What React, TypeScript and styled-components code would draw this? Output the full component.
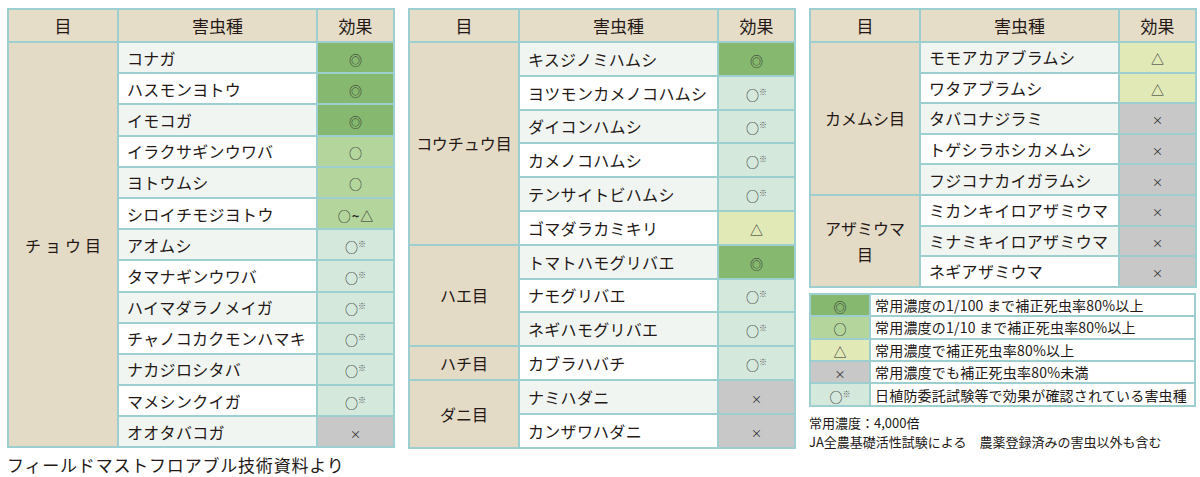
import React from 'react'
import styled, { createGlobalStyle } from 'styled-components'

type Effect = 'double' | 'circle' | 'circleTri' | 'tri' | 'cross' | 'note'

interface Group {
  order: React.ReactNode
  spaced?: boolean
  pests: [string, Effect][]
}

const effectColors: Record<Effect, string> = {
  double: '#86b96f',
  circle: '#b4d59b',
  circleTri: '#b4d59b',
  tri: '#e1e9b7',
  cross: '#c8c8c8',
  note: '#d4e8dc',
}

const tables: { rowHeight: number; groups: Group[] }[] = [
  {
    rowHeight: 31.2,
    groups: [
      {
        order: 'チョウ目',
        spaced: true,
        pests: [
          ['コナガ', 'double'],
          ['ハスモンヨトウ', 'double'],
          ['イモコガ', 'double'],
          ['イラクサギンウワバ', 'circle'],
          ['ヨトウムシ', 'circle'],
          ['シロイチモジヨトウ', 'circleTri'],
          ['アオムシ', 'note'],
          ['タマナギンウワバ', 'note'],
          ['ハイマダラノメイガ', 'note'],
          ['チャノコカクモンハマキ', 'note'],
          ['ナカジロシタバ', 'note'],
          ['マメシンクイガ', 'note'],
          ['オオタバコガ', 'cross'],
        ],
      },
    ],
  },
  {
    rowHeight: 33.8,
    groups: [
      {
        order: 'コウチュウ目',
        pests: [
          ['キスジノミハムシ', 'double'],
          ['ヨツモンカメノコハムシ', 'note'],
          ['ダイコンハムシ', 'note'],
          ['カメノコハムシ', 'note'],
          ['テンサイトビハムシ', 'note'],
          ['ゴマダラカミキリ', 'tri'],
        ],
      },
      {
        order: 'ハエ目',
        pests: [
          ['トマトハモグリバエ', 'double'],
          ['ナモグリバエ', 'note'],
          ['ネギハモグリバエ', 'note'],
        ],
      },
      { order: 'ハチ目', pests: [['カブラハバチ', 'note']] },
      {
        order: 'ダニ目',
        pests: [
          ['ナミハダニ', 'cross'],
          ['カンザワハダニ', 'cross'],
        ],
      },
    ],
  },
  {
    rowHeight: 30.6,
    groups: [
      {
        order: 'カメムシ目',
        pests: [
          ['モモアカアブラムシ', 'tri'],
          ['ワタアブラムシ', 'tri'],
          ['タバコナジラミ', 'cross'],
          ['トゲシラホシカメムシ', 'cross'],
          ['フジコナカイガラムシ', 'cross'],
        ],
      },
      {
        order: (
          <>
            アザミウマ
            <br />目
          </>
        ),
        pests: [
          ['ミカンキイロアザミウマ', 'cross'],
          ['ミナミキイロアザミウマ', 'cross'],
          ['ネギアザミウマ', 'cross'],
        ],
      },
    ],
  },
]

const legend: [Effect, string][] = [
  ['double', '常用濃度の1/100 まで補正死虫率80%以上'],
  ['circle', '常用濃度の1/10 まで補正死虫率80%以上'],
  ['tri', '常用濃度で補正死虫率80%以上'],
  ['cross', '常用濃度でも補正死虫率80%未満'],
  ['note', '日植防委託試験等で効果が確認されている害虫種'],
]

function Mark({ effect }: { effect: Effect }) {
  switch (effect) {
    case 'double':
      return <Glyph>◎</Glyph>
    case 'circle':
      return <Glyph>○</Glyph>
    case 'circleTri':
      return (
        <>
          <Glyph>○</Glyph>
          <Tilde>~</Tilde>
          <Glyph>△</Glyph>
        </>
      )
    case 'tri':
      return <Glyph>△</Glyph>
    case 'cross':
      return <Cross>×</Cross>
    case 'note':
      return (
        <>
          <Glyph>○</Glyph>
          <Star>※</Star>
        </>
      )
  }
}

function PestTable({ rowHeight, groups }: { rowHeight: number; groups: Group[] }) {
  let index = 0
  return (
    <Table>
      <colgroup>
        <col style={{ width: 110 }} />
        <col style={{ width: 199 }} />
        <col style={{ width: 77 }} />
      </colgroup>
      <thead>
        <tr>
          <Head>目</Head>
          <Head>害虫種</Head>
          <Head>効果</Head>
        </tr>
      </thead>
      <tbody>
        {groups.map((group) =>
          group.pests.map(([name, effect], i) => {
            const light = index++ % 2 === 0
            return (
              <Row key={name} $height={rowHeight}>
                {i === 0 && (
                  <Order rowSpan={group.pests.length} $spaced={!!group.spaced}>
                    {group.order}
                  </Order>
                )}
                <Name $light={light}>{name}</Name>
                <EffectCell $effect={effect}>
                  <Mark effect={effect} />
                </EffectCell>
              </Row>
            )
          })
        )}
      </tbody>
    </Table>
  )
}

export default function App() {
  return (
    <>
      <GlobalStyle />
      <Page>
        <Column>
          <PestTable {...tables[0]} />
          <Source>フィールドマストフロアブル技術資料より</Source>
        </Column>
        <Column>
          <PestTable {...tables[1]} />
        </Column>
        <Column>
          <PestTable {...tables[2]} />
          <Legend>
            <tbody>
              {legend.map(([effect, text]) => (
                <LegendRow key={effect}>
                  <LegendMark $effect={effect}>
                    <Mark effect={effect} />
                  </LegendMark>
                  <LegendText>{text}</LegendText>
                </LegendRow>
              ))}
            </tbody>
          </Legend>
          <Notes>
            <div>常用濃度：4,000倍</div>
            <div>JA全農基礎活性試験による　農薬登録済みの害虫以外も含む</div>
          </Notes>
        </Column>
      </Page>
    </>
  )
}

const GlobalStyle = createGlobalStyle`
  html, body {
    margin: 0;
    background: #ffffff;
    font-family: 'Noto Sans CJK JP', 'Noto Sans', sans-serif;
    color: #231815;
  }
`

const Page = styled.div`
  display: flex;
  gap: 14px;
  padding: 8px 0 0 7px;
  width: 1200px;
  height: 477px;
  box-sizing: border-box;
  overflow: hidden;
`

const Column = styled.div`
  display: flex;
  flex-direction: column;
  width: 387px;
`

const Table = styled.table`
  border-collapse: collapse;
  table-layout: fixed;
  width: 387px;

  th,
  td {
    border: 2px solid #9dcfd1;
    padding: 0;
  }
`

const Head = styled.th`
  height: 31px;
  background: #e6ddc9;
  font-weight: 400;
  font-size: 17px;
  line-height: 22px;
  text-align: center;
`

const Row = styled.tr<{ $height: number }>`
  height: ${({ $height }) => $height}px;
`

const Order = styled.td<{ $spaced: boolean }>`
  background: #e4dbc6;
  text-align: center;
  font-size: 16px;
  line-height: 26px;
  letter-spacing: ${({ $spaced }) => ($spaced ? '4px' : '0')};
  text-indent: ${({ $spaced }) => ($spaced ? '4px' : '0')};
`

const Name = styled.td<{ $light: boolean }>`
  background: ${({ $light }) => ($light ? '#f1f5f2' : '#ffffff')};
  padding-left: 8px !important;
  font-size: 16px;
  letter-spacing: 0.3px;
  white-space: nowrap;
`

const EffectCell = styled.td<{ $effect: Effect }>`
  background: ${({ $effect }) => effectColors[$effect]};
  text-align: center;
  color: #2a2a2a;
  line-height: 1;
`

const Glyph = styled.span`
  font-size: 13px;
`

const Tilde = styled.span`
  font-size: 13px;
  font-weight: 700;
  margin: 0 1px;
`

const Cross = styled.span`
  font-size: 11px;
`

const Star = styled.sup`
  font-size: 8px;
  color: #555;
  vertical-align: 5px;
  line-height: 0;
`

const Source = styled.div`
  margin-top: 6px;
  font-size: 17px;
  letter-spacing: 0.8px;
  line-height: 22px;
  white-space: nowrap;
`

const Legend = styled.table`
  margin-top: 5px;
  border-collapse: collapse;
  table-layout: fixed;
  width: 387px;

  td {
    border: 2px solid #9dcfd1;
    padding: 0;
  }
`

const LegendRow = styled.tr`
  height: 22.4px;
`

const LegendMark = styled.td<{ $effect: Effect }>`
  width: 58px;
  background: ${({ $effect }) => effectColors[$effect]};
  text-align: center;
  color: #2a2a2a;
  line-height: 1;
`

const LegendText = styled.td`
  background: #ffffff;
  padding-left: 4px !important;
  font-size: 14px;
  letter-spacing: 0.2px;
  line-height: 18px;
  white-space: nowrap;
`

const Notes = styled.div`
  margin-top: 6px;
  font-size: 13px;
  line-height: 19px;
  white-space: nowrap;
`
